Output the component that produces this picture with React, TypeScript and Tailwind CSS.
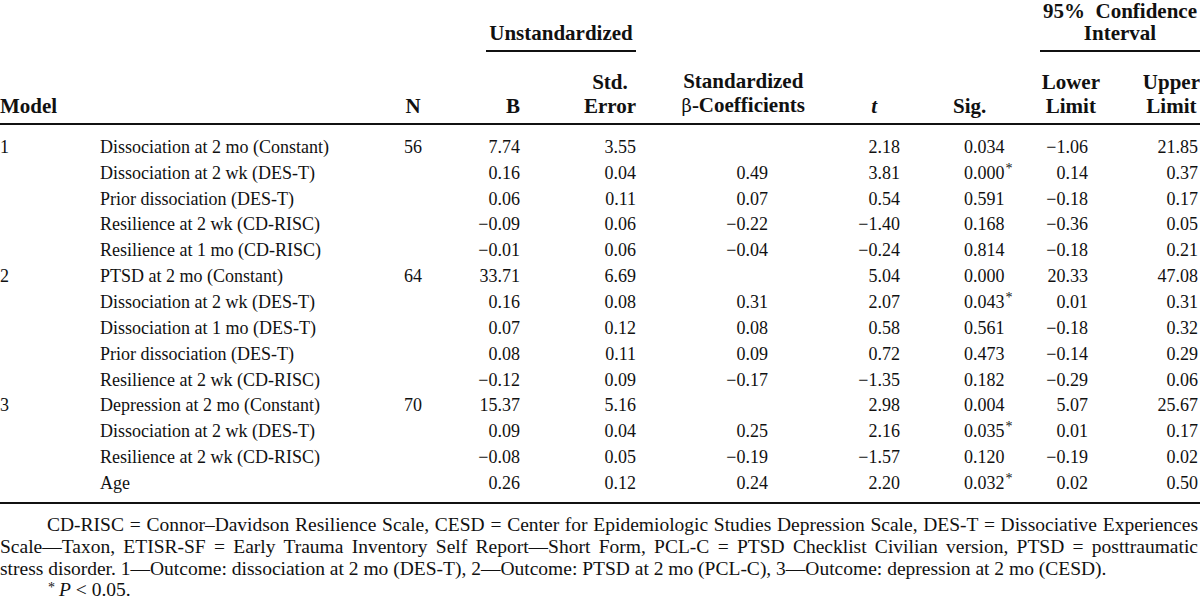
const rows = [
  { m: "1", p: "Dissociation at 2 mo (Constant)", n: "56", b: "7.74", se: "3.55", beta: "", t: "2.18", sig: "0.034", star: false, lo: "−1.06", up: "21.85" },
  { m: "", p: "Dissociation at 2 wk (DES-T)", n: "", b: "0.16", se: "0.04", beta: "0.49", t: "3.81", sig: "0.000", star: true, lo: "0.14", up: "0.37" },
  { m: "", p: "Prior dissociation (DES-T)", n: "", b: "0.06", se: "0.11", beta: "0.07", t: "0.54", sig: "0.591", star: false, lo: "−0.18", up: "0.17" },
  { m: "", p: "Resilience at 2 wk (CD-RISC)", n: "", b: "−0.09", se: "0.06", beta: "−0.22", t: "−1.40", sig: "0.168", star: false, lo: "−0.36", up: "0.05" },
  { m: "", p: "Resilience at 1 mo (CD-RISC)", n: "", b: "−0.01", se: "0.06", beta: "−0.04", t: "−0.24", sig: "0.814", star: false, lo: "−0.18", up: "0.21" },
  { m: "2", p: "PTSD at 2 mo (Constant)", n: "64", b: "33.71", se: "6.69", beta: "", t: "5.04", sig: "0.000", star: false, lo: "20.33", up: "47.08" },
  { m: "", p: "Dissociation at 2 wk (DES-T)", n: "", b: "0.16", se: "0.08", beta: "0.31", t: "2.07", sig: "0.043", star: true, lo: "0.01", up: "0.31" },
  { m: "", p: "Dissociation at 1 mo (DES-T)", n: "", b: "0.07", se: "0.12", beta: "0.08", t: "0.58", sig: "0.561", star: false, lo: "−0.18", up: "0.32" },
  { m: "", p: "Prior dissociation (DES-T)", n: "", b: "0.08", se: "0.11", beta: "0.09", t: "0.72", sig: "0.473", star: false, lo: "−0.14", up: "0.29" },
  { m: "", p: "Resilience at 2 wk (CD-RISC)", n: "", b: "−0.12", se: "0.09", beta: "−0.17", t: "−1.35", sig: "0.182", star: false, lo: "−0.29", up: "0.06" },
  { m: "3", p: "Depression at 2 mo (Constant)", n: "70", b: "15.37", se: "5.16", beta: "", t: "2.98", sig: "0.004", star: false, lo: "5.07", up: "25.67" },
  { m: "", p: "Dissociation at 2 wk (DES-T)", n: "", b: "0.09", se: "0.04", beta: "0.25", t: "2.16", sig: "0.035", star: true, lo: "0.01", up: "0.17" },
  { m: "", p: "Resilience at 2 wk (CD-RISC)", n: "", b: "−0.08", se: "0.05", beta: "−0.19", t: "−1.57", sig: "0.120", star: false, lo: "−0.19", up: "0.02" },
  { m: "", p: "Age", n: "", b: "0.26", se: "0.12", beta: "0.24", t: "2.20", sig: "0.032", star: true, lo: "0.02", up: "0.50" },
];

const Star = () => (
  <span className="inline-block align-top text-[14px] leading-none relative top-[1px] ml-[1px]">*</span>
);

const App = () => {
  return (
    <div className="w-[1200px] h-[601px] overflow-hidden bg-white text-[#111] font-['Liberation_Serif',serif]">
      {/* header */}
      <div className="text-[21px] font-bold leading-[22px]">
        <div className="flex h-[52px] items-end">
          <div className="w-[486px]"></div>
          <div className="w-[150px] text-center border-b-2 border-[#111] pb-[6px]">Unstandardized</div>
          <div className="flex-1"></div>
          <div className="w-[160px] text-center border-b-2 border-[#111] pb-[6px] whitespace-pre">
            {"95%  Confidence"}
            <br />
            Interval
          </div>
        </div>
        <div className="flex items-end mt-[17px] pb-[5px] border-b-2 border-[#111] leading-6">
          <div className="w-[100px]">Model</div>
          <div className="w-[280px]"></div>
          <div className="w-[66px] text-center">N</div>
          <div className="w-[74px] text-right">B</div>
          <div className="w-[116px] flex justify-end">
            <div className="text-center">
              Std.
              <br />
              Error
            </div>
          </div>
          <div className="w-[169px] flex justify-end">
            <div className="text-center">
              Standardized
              <br />
              <span className="font-normal font-['DejaVu_Serif',serif] text-[18px]">β</span>-Coefficients
            </div>
          </div>
          <div className="w-[95px] text-right pr-[23px] italic">t</div>
          <div className="w-[110px] pl-[53px]">Sig.</div>
          <div className="w-[90px] flex justify-end">
            <div className="text-center">
              Lower
              <br />
              Limit
            </div>
          </div>
          <div className="w-[100px] flex justify-end">
            <div className="text-center">
              Upper
              <br />
              Limit
            </div>
          </div>
        </div>
      </div>

      {/* body */}
      <div className="pt-[9px] pb-[6px] border-b-2 border-[#111] text-[18px]">
        {rows.map((r, i) => (
          <div key={i} className="flex h-[25.85px] items-center leading-6 whitespace-nowrap">
            <div className="w-[100px]">{r.m}</div>
            <div className="w-[280px]">{r.p}</div>
            <div className="w-[66px] text-center">{r.n}</div>
            <div className="w-[74px] text-right">{r.b}</div>
            <div className="w-[116px] text-right">{r.se}</div>
            <div className="w-[169px] text-right pr-[37px]">{r.beta}</div>
            <div className="w-[95px] text-right">{r.t}</div>
            <div className="w-[110px] pl-[64px]">
              {r.sig}
              {r.star && <Star />}
            </div>
            <div className="w-[90px] text-right pr-[12px]">{r.lo}</div>
            <div className="w-[100px] text-right pr-[2px]">{r.up}</div>
          </div>
        ))}
      </div>

      {/* footer */}
      <div className="pt-[10px] text-[19.5px] leading-[22px] whitespace-nowrap">
        <div className="text-justify [text-align-last:justify] pl-[47px] pr-[2px]">
          CD-RISC = Connor–Davidson Resilience Scale, CESD = Center for Epidemiologic Studies Depression Scale, DES-T = Dissociative Experiences
        </div>
        <div className="text-justify [text-align-last:justify] pr-[2px]">
          Scale—Taxon, ETISR-SF = Early Trauma Inventory Self Report—Short Form, PCL-C = PTSD Checklist Civilian version, PTSD = posttraumatic
        </div>
        <div>
          stress disorder. 1—Outcome: dissociation at 2 mo (DES-T), 2—Outcome: PTSD at 2 mo (PCL-C), 3—Outcome: depression at 2 mo (CESD).
        </div>
        <div className="pl-[47px] leading-[20px]">
          <Star />
          <span className="italic ml-[4px]">P</span> &lt; 0.05.
        </div>
      </div>
    </div>
  );
};

export default App;
